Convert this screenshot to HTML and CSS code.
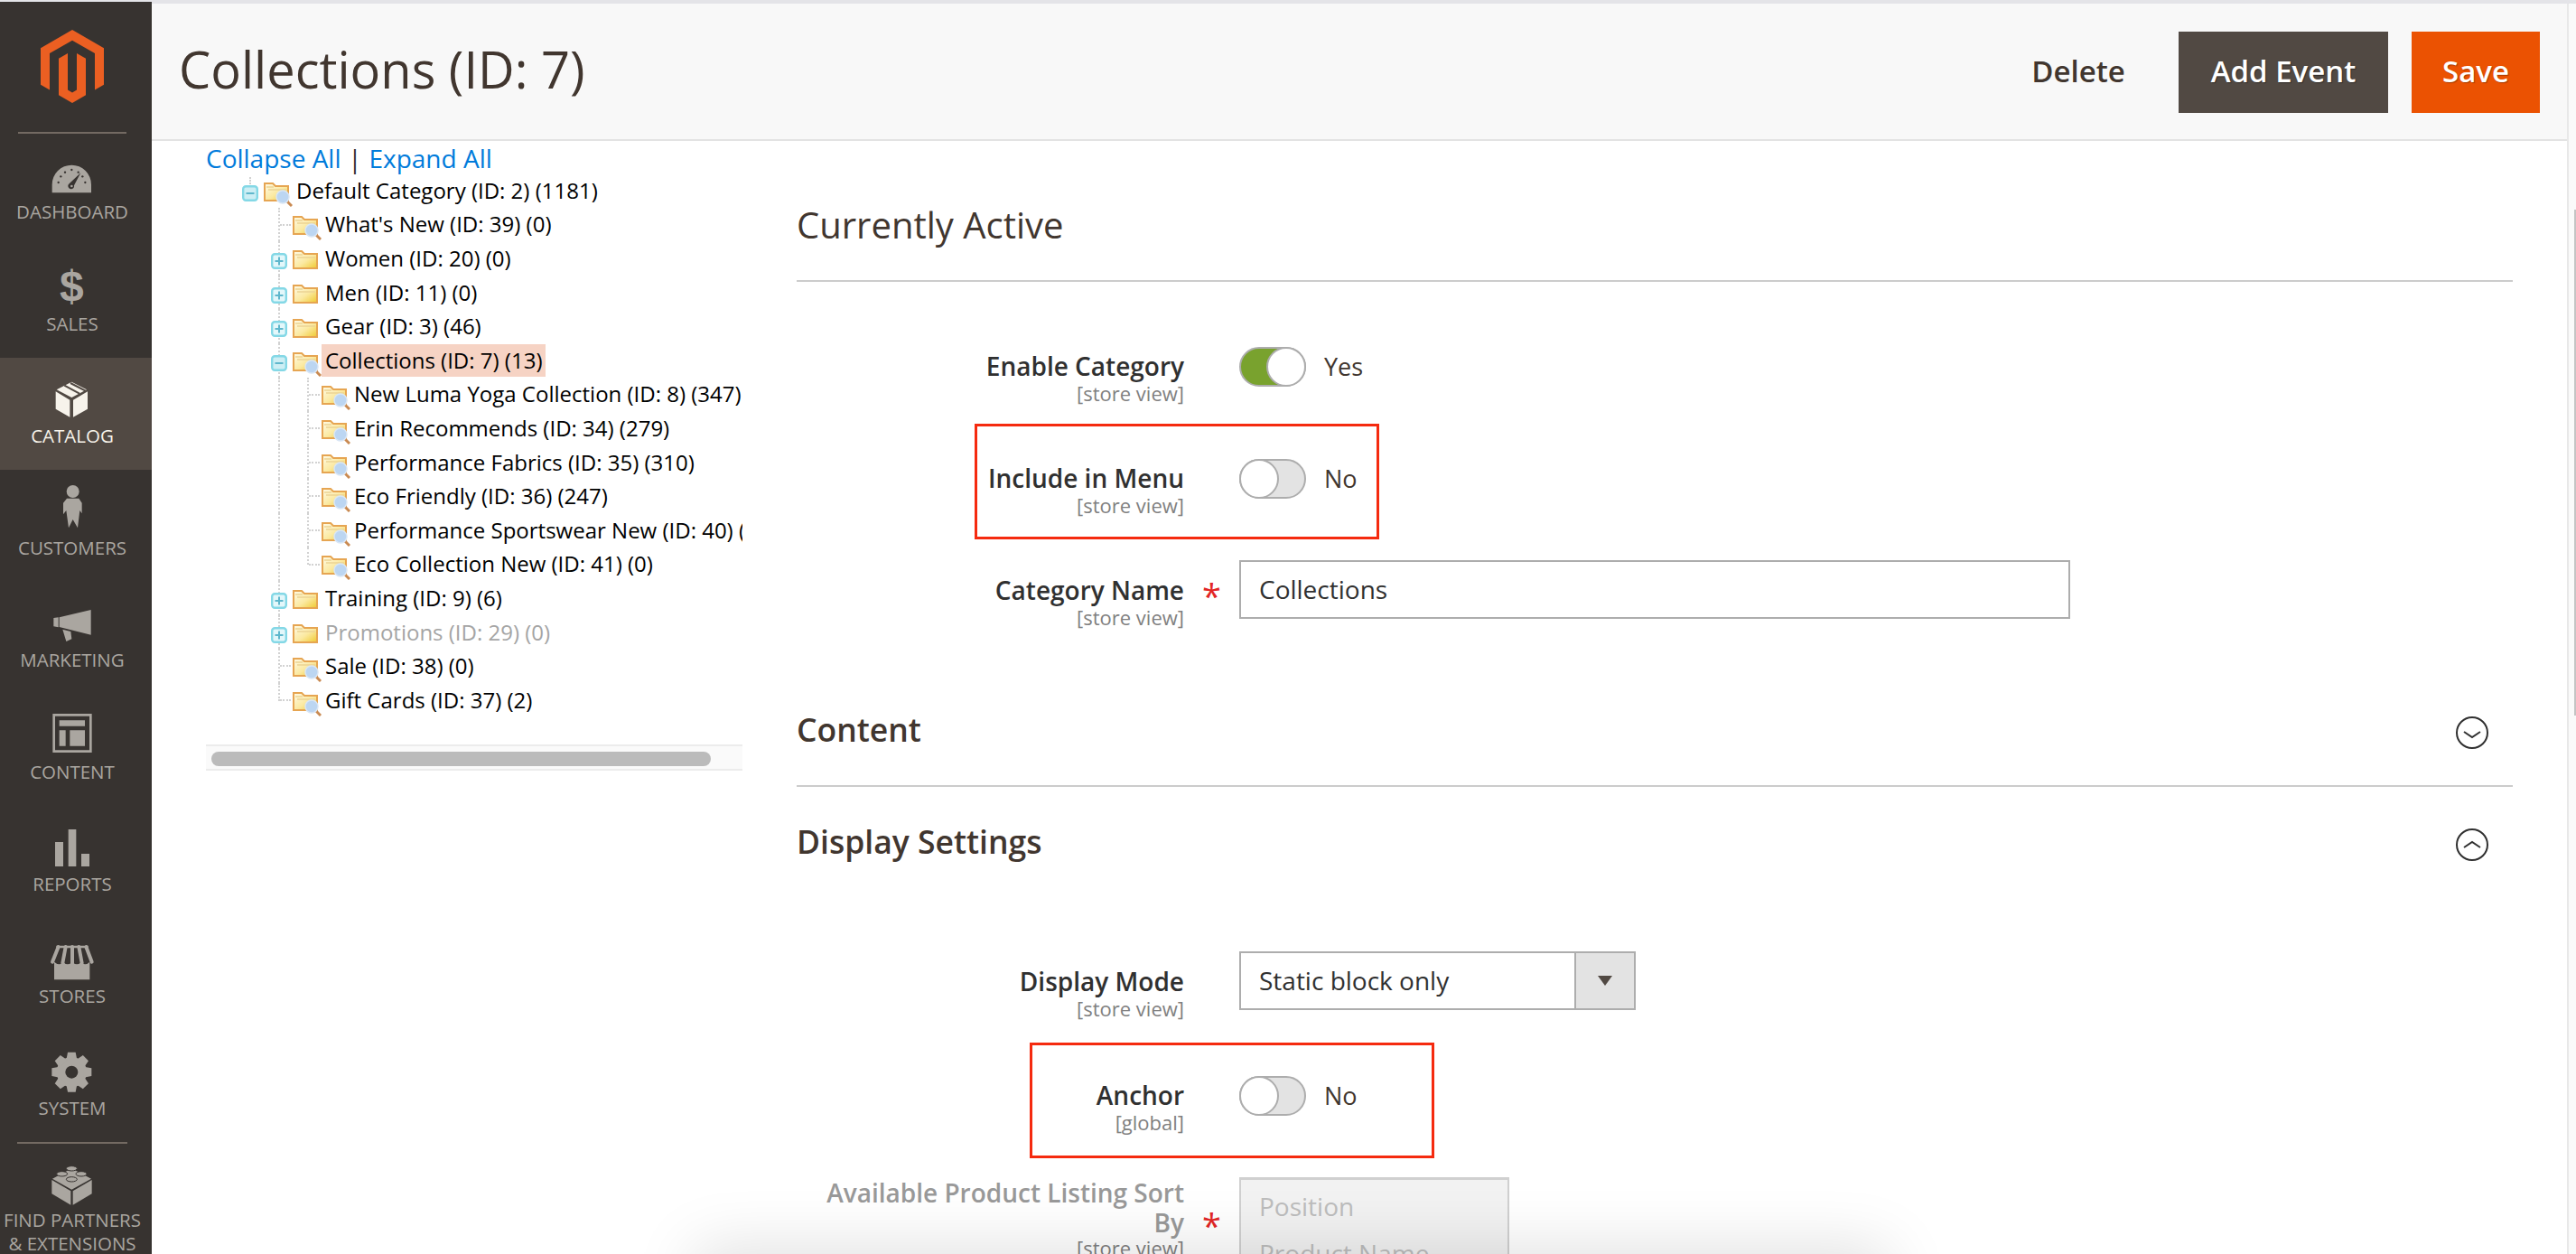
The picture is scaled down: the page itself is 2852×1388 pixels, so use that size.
FILE: index.html
```html
<!DOCTYPE html>
<html lang="en">
<head>
<meta charset="utf-8">
<title>Collections (ID: 7)</title>
<link rel="stylesheet" href="styles.css">
</head>
<body>
<svg class="defs" width="0" height="0" aria-hidden="true">
  <defs>
    <linearGradient id="fg" x1="0" y1="0" x2="1" y2="1">
      <stop offset="0" stop-color="#fffbe8"/>
      <stop offset=".55" stop-color="#fbe9a0"/>
      <stop offset="1" stop-color="#efc92e"/>
    </linearGradient>
    <symbol id="folder" viewBox="0 0 28 22">
      <path d="M1 21V2h9l3 3h14v16z" fill="url(#fg)" stroke="#e6a552" stroke-width="2"/>
      <path d="M3 6h8M5 9h20" stroke="#ecd394" stroke-width="1.5"/>
    </symbol>
    <symbol id="folder-search" viewBox="0 0 32 28">
      <path d="M1 21V2h9l3 3h14v16z" fill="url(#fg)" stroke="#e6a552" stroke-width="2"/>
      <path d="M3 6h8M5 9h20" stroke="#ecd394" stroke-width="1.5"/>
      <path d="M25 21l6 6" stroke="#c98a52" stroke-width="3"/>
      <circle cx="21" cy="17" r="7" fill="#bcd6f2" stroke="#d9e6f5" stroke-width="1.5"/>
    </symbol>
    <symbol id="plus" viewBox="0 0 18 18">
      <rect x="1.2" y="1.2" width="15.6" height="15.6" rx="3" fill="#e3f7fa" stroke="#84d8e6" stroke-width="2.4"/>
      <path d="M4.5 9h9M9 4.5v9" stroke="#5fb7cc" stroke-width="2"/>
    </symbol>
    <symbol id="minus" viewBox="0 0 18 18">
      <rect x="1.2" y="1.2" width="15.6" height="15.6" rx="3" fill="#cdeef4" stroke="#84d8e6" stroke-width="2.4"/>
      <path d="M4.5 9h9" stroke="#5fb7cc" stroke-width="2"/>
    </symbol>
  </defs>
</svg>

<div class="app">
  <aside class="sidebar">
    <div class="logo-wrap">
      <svg class="logo" viewBox="0 0 20.78 24"><path d="M10.39 24l-4.455-2.572v-12l2.97-1.715v12.001l1.485.902 1.485-.902V7.713l2.971 1.715v12L10.39 24zM20.781 6v12l-2.969 1.714V7.713L10.39 3.43 2.964 7.713v12.001L0 18V6L10.39 0l10.391 6z"/></svg>
    </div>
    <nav class="nav">
      <a class="nav-item">
        <svg class="nav-icon" viewBox="0 0 180 180">
          <path d="M23 142V115A65 65 0 0 1 153 115V142Z"/>
          <g class="cut-fill"><circle cx="44" cy="108" r="3.5"/><circle cx="52" cy="88" r="3.5"/><circle cx="66" cy="74" r="3.5"/><circle cx="88" cy="66" r="3.5"/><circle cx="110" cy="74" r="3.5"/><circle cx="133" cy="108" r="3.5"/><circle cx="124" cy="88" r="3.5"/>
          <path d="M118 76L96 118A10 10 0 1 1 80 112z"/></g>
          <circle cx="88" cy="120" r="4"/>
        </svg>
        <span>DASHBOARD</span>
      </a>
      <a class="nav-item">
        <svg class="nav-icon" viewBox="0 0 180 180"><text class="dollar" x="88" y="129">$</text></svg>
        <span>SALES</span>
      </a>
      <a class="nav-item active">
        <svg class="nav-icon" viewBox="0 0 180 180">
          <path d="M35 58L82 86V143L35 116zM93 86L141 58V116L93 143zM88 26L138 52 88 78 38 52z"/>
          <path class="cut" d="M64 38L114 65M84 30L134 56" stroke-width="6"/>
        </svg>
        <span>CATALOG</span>
      </a>
      <a class="nav-item">
        <svg class="nav-icon" viewBox="0 0 180 180">
          <circle cx="92" cy="18" r="21"/>
          <path d="M72 41H112L122 56V91L115 81 108 139 92 111 78 139 70 81 60 94V56z"/>
        </svg>
        <span>CUSTOMERS</span>
      </a>
      <a class="nav-item">
        <svg class="nav-icon" viewBox="0 0 180 180">
          <path d="M47 64L152 39V122L47 96zM28 66L44 64V97L28 94zM58 104L85 111 88 136 70 144z"/>
        </svg>
        <span>MARKETING</span>
      </a>
      <a class="nav-item">
        <svg class="nav-icon" viewBox="0 0 180 180">
          <path fill-rule="evenodd" d="M25 12H155V141H25zM33 20V133H147V20z"/>
          <path d="M47 34H132V53H47zM47 67H68V119H47zM82 67H132V119H82z"/>
        </svg>
        <span>CONTENT</span>
      </a>
      <a class="nav-item">
        <svg class="nav-icon" viewBox="0 0 180 180">
          <path d="M33 66H60V147H33zM77 24H103V147H77zM120 105H147V147H120z"/>
        </svg>
        <span>REPORTS</span>
      </a>
      <a class="nav-item">
        <svg class="nav-icon" viewBox="0 0 180 180">
          <path d="M37 38H143V46H37z"/>
          <path class="awn" d="M44 42L24 92M68 42L58 96M90 42V96M112 42L122 96M136 42L155 92" stroke-width="12"/>
          <path d="M30 92Q48 108 60 92 74 108 90 92 106 108 120 92 132 108 148 92V151H30z"/>
        </svg>
        <span>STORES</span>
      </a>
      <a class="nav-item">
        <svg class="nav-icon" viewBox="0 0 180 180">
          <g transform="translate(88 86)">
            <circle r="50"/>
            <path d="M-13-66H13L18-40H-18z"/>
            <path d="M-13-66H13L18-40H-18z" transform="rotate(45)"/>
            <path d="M-13-66H13L18-40H-18z" transform="rotate(90)"/>
            <path d="M-13-66H13L18-40H-18z" transform="rotate(135)"/>
            <path d="M-13-66H13L18-40H-18z" transform="rotate(180)"/>
            <path d="M-13-66H13L18-40H-18z" transform="rotate(225)"/>
            <path d="M-13-66H13L18-40H-18z" transform="rotate(270)"/>
            <path d="M-13-66H13L18-40H-18z" transform="rotate(315)"/>
            <circle class="cut-fill" r="21"/>
          </g>
        </svg>
        <span>SYSTEM</span>
      </a>
      <a class="nav-item partners">
        <svg class="nav-icon" viewBox="0 0 180 180">
          <path d="M22 66L85 103V149L22 112zM92 103L155 66V112L92 149zM88 28L153 62 88 98 24 62z"/>
          <g class="stud"><ellipse cx="88" cy="28" rx="18" ry="8"/><ellipse cx="56" cy="46" rx="18" ry="8"/><ellipse cx="120" cy="46" rx="18" ry="8"/><ellipse cx="88" cy="64" rx="18" ry="8"/></g>
        </svg>
        <span>FIND PARTNERS<br>&amp; EXTENSIONS</span>
      </a>
    </nav>
  </aside>

  <main class="main">
    <header class="page-header">
      <h1 class="page-title">Collections (ID: 7)</h1>
      <div class="actions">
        <button class="btn btn-link">Delete</button>
        <button class="btn btn-dark">Add Event</button>
        <button class="btn btn-primary">Save</button>
      </div>
    </header>

    <div class="content">
      <section class="tree-col">
        <div class="tree-links"><a>Collapse All</a> <span class="sep">|</span> <a>Expand All</a></div>
        <div class="tree-scroll">
          <div class="row"><span class="cell stub"><svg class="tg"><use href="#minus"/></svg></span><svg class="fs"><use href="#folder-search"/></svg><span class="txt">Default Category (ID: 2) (1181)</span></div>
          <div class="row"><span class="cell"></span><span class="cell elbow line"></span><svg class="fs"><use href="#folder-search"/></svg><span class="txt">What's New (ID: 39) (0)</span></div>
          <div class="row"><span class="cell"></span><span class="cell line"><svg class="tg"><use href="#plus"/></svg></span><svg class="f"><use href="#folder"/></svg><span class="txt">Women (ID: 20) (0)</span></div>
          <div class="row"><span class="cell"></span><span class="cell line"><svg class="tg"><use href="#plus"/></svg></span><svg class="f"><use href="#folder"/></svg><span class="txt">Men (ID: 11) (0)</span></div>
          <div class="row"><span class="cell"></span><span class="cell line"><svg class="tg"><use href="#plus"/></svg></span><svg class="f"><use href="#folder"/></svg><span class="txt">Gear (ID: 3) (46)</span></div>
          <div class="row"><span class="cell"></span><span class="cell line"><svg class="tg"><use href="#minus"/></svg></span><svg class="fs"><use href="#folder-search"/></svg><span class="txt selected">Collections (ID: 7) (13)</span></div>
          <div class="row"><span class="cell"></span><span class="cell line"></span><span class="cell elbow line"></span><svg class="fs"><use href="#folder-search"/></svg><span class="txt">New Luma Yoga Collection (ID: 8) (347)</span></div>
          <div class="row"><span class="cell"></span><span class="cell line"></span><span class="cell elbow line"></span><svg class="fs"><use href="#folder-search"/></svg><span class="txt">Erin Recommends (ID: 34) (279)</span></div>
          <div class="row"><span class="cell"></span><span class="cell line"></span><span class="cell elbow line"></span><svg class="fs"><use href="#folder-search"/></svg><span class="txt">Performance Fabrics (ID: 35) (310)</span></div>
          <div class="row"><span class="cell"></span><span class="cell line"></span><span class="cell elbow line"></span><svg class="fs"><use href="#folder-search"/></svg><span class="txt">Eco Friendly (ID: 36) (247)</span></div>
          <div class="row"><span class="cell"></span><span class="cell line"></span><span class="cell elbow line"></span><svg class="fs"><use href="#folder-search"/></svg><span class="txt">Performance Sportswear New (ID: 40) (0)</span></div>
          <div class="row"><span class="cell"></span><span class="cell line"></span><span class="cell elbow line last"></span><svg class="fs"><use href="#folder-search"/></svg><span class="txt">Eco Collection New (ID: 41) (0)</span></div>
          <div class="row"><span class="cell"></span><span class="cell line"><svg class="tg"><use href="#plus"/></svg></span><svg class="f"><use href="#folder"/></svg><span class="txt">Training (ID: 9) (6)</span></div>
          <div class="row"><span class="cell"></span><span class="cell line"><svg class="tg"><use href="#plus"/></svg></span><svg class="f"><use href="#folder"/></svg><span class="txt muted">Promotions (ID: 29) (0)</span></div>
          <div class="row"><span class="cell"></span><span class="cell elbow line"></span><svg class="fs"><use href="#folder-search"/></svg><span class="txt">Sale (ID: 38) (0)</span></div>
          <div class="row"><span class="cell"></span><span class="cell elbow line last"></span><svg class="fs"><use href="#folder-search"/></svg><span class="txt">Gift Cards (ID: 37) (2)</span></div>
          <div class="tree-bar"><div class="tree-thumb"></div></div>
        </div>
      </section>

      <section class="form">
        <h2 class="active-title">Currently Active</h2>

        <div class="field f-enable">
          <div class="lbl"><div class="lbl-text">Enable Category</div><div class="scope">[store view]</div></div>
          <div class="req"></div>
          <span class="toggle on"><i></i></span><span class="tv">Yes</span>
        </div>

        <div class="field f-menu">
          <div class="mark mark-menu"></div>
          <div class="lbl"><div class="lbl-text">Include in Menu</div><div class="scope">[store view]</div></div>
          <div class="req"></div>
          <span class="toggle"><i></i></span><span class="tv">No</span>
        </div>

        <div class="field f-name">
          <div class="lbl lbl-tall"><div class="lbl-text">Category Name</div><div class="scope">[store view]</div></div>
          <div class="req star-tall">*</div>
          <div class="input">Collections</div>
        </div>

        <div class="section s-content">
          <h3>Content</h3>
          <svg class="chev" viewBox="0 0 36 36"><circle cx="18" cy="18" r="17"/><path d="M9 17l9 6 9-6"/></svg>
        </div>

        <div class="section s-display">
          <h3>Display Settings</h3>
          <svg class="chev" viewBox="0 0 36 36"><circle cx="18" cy="18" r="17"/><path d="M9 21l9-6 9 6"/></svg>
        </div>

        <div class="field f-mode">
          <div class="lbl lbl-tall"><div class="lbl-text">Display Mode</div><div class="scope">[store view]</div></div>
          <div class="req"></div>
          <div class="select"><span class="select-val">Static block only</span><span class="select-arrow"><i></i></span></div>
        </div>

        <div class="field f-anchor">
          <div class="mark mark-anchor"></div>
          <div class="lbl"><div class="lbl-text">Anchor</div><div class="scope">[global]</div></div>
          <div class="req"></div>
          <span class="toggle"><i></i></span><span class="tv">No</span>
        </div>

        <div class="field f-sort">
          <div class="lbl lbl-sort"><div class="lbl-text">Available Product Listing Sort By</div><div class="scope">[store view]</div></div>
          <div class="req star-sort">*</div>
          <div class="multi"><div>Position</div><div>Product Name</div></div>
        </div>
      </section>
    </div>
  </main>

  <div class="rail"><div class="rail-thumb"></div></div>
</div>
<div class="bottom-shadow"></div>
</body>
</html>
```

FILE: styles.css
```css
* { box-sizing: border-box; }
html, body { margin: 0; height: 100%; overflow: hidden; background: #fff; }
body { font-family: "Open Sans", "Liberation Sans", sans-serif; color: #303030; position: relative; }
.defs { position: absolute; }
.app { display: flex; height: 1388px; padding-top: 2px; background: #e4e4e8; overflow: hidden; }

/* sidebar */
.sidebar { flex: 0 0 168px; background: #373330; padding-right: 8px; }
.logo-wrap { height: 146px; margin-left: 20px; width: 120px; border-bottom: 2px solid #736a62; display: flex; justify-content: center; padding-top: 31px; }
.logo { width: 70px; height: 81px; fill: #eb5f22; }
.nav-item { display: flex; flex-direction: column; align-items: center; height: 124px; padding-top: 18px; color: #aaa6a0; font-size: 20.5px; line-height: 26px; text-align: center; margin-right: -8px; padding-right: 8px; }
.nav-item span { margin-top: -5px; display: block; white-space: nowrap; }
.nav-icon { width: 60px; height: 60px; fill: #aaa6a0; flex: none; overflow: visible; }
.nav-item.active { background: #514943; color: #f7f3eb; }
.nav-item.active .nav-icon { fill: #f7f3eb; }
.cut { fill: none; stroke: #514943; }
.cut-fill { fill: #373330; }
.awn { fill: none; stroke: #aaa6a0; stroke-linecap: round; }
.dollar { font-family: "Liberation Sans", sans-serif; font-weight: 700; font-size: 144px; text-anchor: middle; }
.stud { stroke: #373330; stroke-width: 3; }
.partners { position: relative; height: auto; padding-top: 18px; border-top: 2px solid #736a62; border-image: linear-gradient(to right, transparent 20px, #736a62 20px, #736a62 140px, transparent 140px) 1; }
.partners span { margin-top: -6px; line-height: 25.5px; }

/* main */
.main { flex: 1; min-width: 0; display: flex; flex-direction: column; background: #fff; }
.page-header { flex: 0 0 154px; border-top: 2px solid #e4e4e8; border-bottom: 2px solid #e3e3e3; background: #f8f8f8; display: flex; align-items: center; justify-content: space-between; padding: 0 30px 0 30px; }
.page-title { margin: 0 0 5px; font-size: 56px; font-weight: 400; color: #41362f; line-height: 1.2; }
.actions { display: flex; align-items: center; gap: 26px; padding-top: 2px; }
.btn { border: 0; height: 90px; font-family: inherit; font-size: 33px; font-weight: 600; padding: 0 0 3px; }
.btn-link { background: none; color: #41362f; width: 104px; margin-right: 33px; }
.btn-dark { background: #514943; color: #fff; width: 232px; text-shadow: 1px 1px 1px rgba(0,0,0,.4); }
.btn-primary { background: #eb5202; color: #fff; width: 142px; text-shadow: 1px 1px 1px rgba(0,0,0,.3); }

.content { flex: 1; display: flex; padding: 0 60px; min-height: 0; gap: 60px; }

/* tree */
.tree-col { flex: 0 0 594px; }
.tree-links { margin-top: 2px; height: 34px; font-size: 28px; line-height: 34px; color: #303030; white-space: nowrap; }
.tree-links a { color: #007bdb; }
.sep { margin: 0 .5px; }
.tree-scroll { overflow: hidden; width: 594px; }
.row { height: 37.6px; display: flex; align-items: center; white-space: nowrap; font-size: 24px; color: #000; padding-left: 32px; }
.cell { flex: 0 0 32px; height: 37.6px; position: relative; display: flex; align-items: center; }
.cell.line::before { content: ""; position: absolute; left: 16px; top: 0; bottom: 0; border-left: 2px dotted #d2d2d2; }
.cell.elbow::after { content: ""; position: absolute; left: 18px; width: 12px; top: 18px; border-top: 2px dotted #d2d2d2; }
.cell.last::before { bottom: 18px; }
.stub::before { content: ""; position: absolute; left: 16px; top: 4px; height: 8px; border-left: 2px dotted #d2d2d2; }
.tg { width: 18px; height: 18px; position: relative; margin-left: 8px; margin-top: 6px; }
.f { flex: none; width: 28px; height: 22px; margin-right: 8px; margin-top: 3px; }
.fs { flex: none; width: 32px; height: 28px; margin-right: 4px; margin-top: 8px; }
.txt { display: inline-block; line-height: 36px; }
.row .fs + .selected { padding: 0 4px 0 4px; margin-left: -4px; background: #f6d3c4; }
.muted { color: #a5a5a5; }
.tree-bar { margin-top: 30.5px; height: 29px; background: #fafafa; border-top: 2px solid #ececec; border-bottom: 2px solid #ececec; padding: 6px 2px 6px 6px; }
.tree-thumb { width: 553px; height: 16px; border-radius: 8px; background: #bbb; }

/* form */
.form { flex: 1; min-width: 0; }
.active-title { margin: 65px 0 0; font-size: 40px; font-weight: 400; line-height: 56px; color: #41362f; padding-bottom: 33px; border-bottom: 2px solid #ccc; }
.field { display: flex; align-items: flex-start; position: relative; }
.f-enable { margin-top: 72px; }
.f-menu { margin-top: 60px; }
.f-name { margin-top: 48px; }
.f-mode { margin-top: 98px; }
.f-anchor { margin-top: 62px; }
.f-sort { margin-top: 48px; }
.s-content { margin-top: 89px; }
.lbl { flex: 0 0 429px; text-align: right; padding-top: 5px; }
.lbl-tall { padding-top: 17px; }
.lbl-sort { padding-top: 1px; }
.lbl-text { font-size: 28px; font-weight: 600; line-height: 32px; color: #303030; }
.scope { font-size: 22px; line-height: 26px; margin-top: 1px; color: #808080; }
.f-sort .lbl-text { color: #999; line-height: 32.5px; }
.f-sort .scope { color: #808080; margin-top: 2px; line-height: 20px; }
.req { flex: 0 0 61px; color: #e22626; font-size: 38px; font-weight: 400; line-height: 40px; padding-left: 20px; }
.star-tall { padding-top: 19px; }
.star-sort { padding-top: 33px; }
.toggle { flex: none; width: 74px; height: 44px; border-radius: 22px; border: 2px solid #adadad; background: #e3e3e3; position: relative; display: block; }
.toggle i { position: absolute; left: -2px; top: -2px; width: 44px; height: 44px; border-radius: 50%; background: #fff; border: 2px solid #adadad; }
.toggle.on { background: #79a22e; }
.toggle.on i { left: 28px; }
.tv { font-size: 27px; line-height: 44px; color: #41362f; margin-left: 20px; }
.input { width: 920px; height: 65px; border: 2px solid #adadad; padding: 0 20px; font-size: 28px; line-height: 60px; color: #303030; }
.select { width: 439px; height: 65px; border: 2px solid #adadad; display: flex; font-size: 28px; line-height: 60px; color: #303030; }
.select-val { flex: 1; padding-left: 20px; }
.select-arrow { flex: 0 0 66px; background: #e3e3e3; border-left: 2px solid #adadad; display: flex; align-items: center; justify-content: center; }
.select-arrow i { width: 0; height: 0; border-left: 8px solid transparent; border-right: 8px solid transparent; border-top: 11px solid #514943; }
.multi { width: 299px; height: 200px; background: #f2f2f2; border: 2px solid #d0d0d0; border-top-width: 3px; padding: 3px 20px; font-size: 28px; line-height: 52px; color: #bdbdbd; }
.mark { position: absolute; border: 3px solid #f52a0f; height: 128px; width: 448px; pointer-events: none; }
.mark-menu { left: 197px; top: -39px; }
.mark-anchor { left: 258px; top: -37px; }

.section { display: flex; justify-content: space-between; align-items: flex-start; padding-right: 27px; }
.section h3 { margin: 0; font-size: 35.5px; font-weight: 600; line-height: 44px; padding-bottom: 2px; color: #41362f; }
.s-content { padding-bottom: 38px; border-bottom: 2px solid #ccc; }
.s-display { margin-top: 38px; }
.chev { width: 36px; height: 36px; margin-top: 8px; fill: none; stroke: #303030; stroke-width: 2; }

/* window rail */
.rail { flex: 0 0 10px; background: #fafafa; border-left: 2px solid #e8e8e8; margin-top: 2px; }
.rail-thumb { margin-top: 228px; margin-left: 6px; height: 560px; width: 2px; background: #c4c4c4; }

.bottom-shadow { position: absolute; left: 780px; width: 1300px; top: 1392px; height: 60px; background: #e8e8e8; box-shadow: 0 0 70px 10px rgba(0,0,0,.13); pointer-events: none; }
```
